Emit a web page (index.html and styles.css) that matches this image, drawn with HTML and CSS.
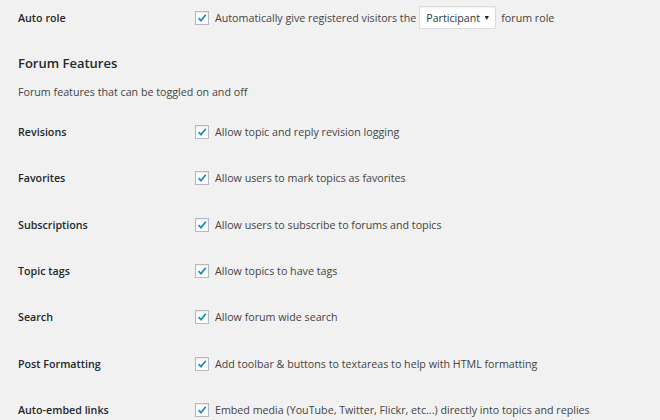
FILE: index.html
```html
<!DOCTYPE html>
<html lang="en">
<head>
    <meta charset="UTF-8">
    <meta name="viewport" content="width=device-width, initial-scale=1.0">
    <title>Forum Settings</title>
    <link rel="stylesheet" href="styles.css">
</head>
<body>
    <div class="wrap">
        <div class="form-table first">
            <div class="row">
                <div class="label">Auto role</div>
                <div class="field">
                    <span class="check"><svg viewBox="0 0 12 12" width="12" height="12"><path d="M2.5 6.2 L5 8.6 L9.8 2.8" fill="none" stroke="#1e8cbe" stroke-width="1.8"/></svg></span>
                    <span>Automatically give registered visitors the</span>
                    <span class="select">Participant <span class="arrow">&#9660;</span></span>
                    <span>forum role</span>
                </div>
            </div>
        </div>

        <h2>Forum Features</h2>
        <p class="description">Forum features that can be toggled on and off</p>

        <div class="form-table">
            <div class="row">
                <div class="label">Revisions</div>
                <div class="field">
                    <span class="check"><svg viewBox="0 0 12 12" width="12" height="12"><path d="M2.5 6.2 L5 8.6 L9.8 2.8" fill="none" stroke="#1e8cbe" stroke-width="1.8"/></svg></span>
                    <span>Allow topic and reply revision logging</span>
                </div>
            </div>
            <div class="row">
                <div class="label">Favorites</div>
                <div class="field">
                    <span class="check"><svg viewBox="0 0 12 12" width="12" height="12"><path d="M2.5 6.2 L5 8.6 L9.8 2.8" fill="none" stroke="#1e8cbe" stroke-width="1.8"/></svg></span>
                    <span>Allow users to mark topics as favorites</span>
                </div>
            </div>
            <div class="row">
                <div class="label">Subscriptions</div>
                <div class="field">
                    <span class="check"><svg viewBox="0 0 12 12" width="12" height="12"><path d="M2.5 6.2 L5 8.6 L9.8 2.8" fill="none" stroke="#1e8cbe" stroke-width="1.8"/></svg></span>
                    <span>Allow users to subscribe to forums and topics</span>
                </div>
            </div>
            <div class="row">
                <div class="label">Topic tags</div>
                <div class="field">
                    <span class="check"><svg viewBox="0 0 12 12" width="12" height="12"><path d="M2.5 6.2 L5 8.6 L9.8 2.8" fill="none" stroke="#1e8cbe" stroke-width="1.8"/></svg></span>
                    <span>Allow topics to have tags</span>
                </div>
            </div>
            <div class="row">
                <div class="label">Search</div>
                <div class="field">
                    <span class="check"><svg viewBox="0 0 12 12" width="12" height="12"><path d="M2.5 6.2 L5 8.6 L9.8 2.8" fill="none" stroke="#1e8cbe" stroke-width="1.8"/></svg></span>
                    <span>Allow forum wide search</span>
                </div>
            </div>
            <div class="row">
                <div class="label">Post Formatting</div>
                <div class="field">
                    <span class="check"><svg viewBox="0 0 12 12" width="12" height="12"><path d="M2.5 6.2 L5 8.6 L9.8 2.8" fill="none" stroke="#1e8cbe" stroke-width="1.8"/></svg></span>
                    <span>Add toolbar &amp; buttons to textareas to help with HTML formatting</span>
                </div>
            </div>
            <div class="row">
                <div class="label">Auto-embed links</div>
                <div class="field">
                    <span class="check"><svg viewBox="0 0 12 12" width="12" height="12"><path d="M2.5 6.2 L5 8.6 L9.8 2.8" fill="none" stroke="#1e8cbe" stroke-width="1.8"/></svg></span>
                    <span>Embed media (YouTube, Twitter, Flickr, etc...) directly into topics and replies</span>
                </div>
            </div>
        </div>
    </div>
</body>
</html>
```

FILE: styles.css
```css
body {
    margin: 0;
    padding: 0;
    background-color: #f1f1f1;
    font-family: "Open Sans", sans-serif;
    font-size: 10.7px;
    color: #444;
}
.wrap {
    padding: 0 18px;
}
.row {
    display: flex;
    align-items: center;
    height: 46.33px;
}
.first .row {
    height: 35px;
}
.label {
    width: 177px;
    flex-shrink: 0;
    font-weight: 600;
    color: #23282d;
}
.field {
    display: flex;
    align-items: center;
    gap: 5px;
}
.check {
    width: 12px;
    height: 12px;
    border: 1px solid #b4b9be;
    background: white;
    box-shadow: inset 0 1px 2px rgba(0, 0, 0, 0.1);
    display: flex;
    margin-right: 1px;
}
.select {
    display: flex;
    align-items: center;
    justify-content: space-between;
    width: 64px;
    height: 21px;
    padding: 0 5px 0 6px;
    margin-left: -2px;
    background: white;
    border: 1px solid #ddd;
    box-shadow: inset 0 1px 2px rgba(0, 0, 0, 0.07);
    color: #32373c;
}
.arrow {
    font-size: 7px;
    color: #222;
}
h2 {
    font-size: 13px;
    font-weight: 600;
    color: #23282d;
    margin: 17px 0 0;
    line-height: 22px;
}
.description {
    margin: 10px 0 0;
    line-height: 16px;
}
.form-table:last-child {
    margin-top: 9px;
}
```
